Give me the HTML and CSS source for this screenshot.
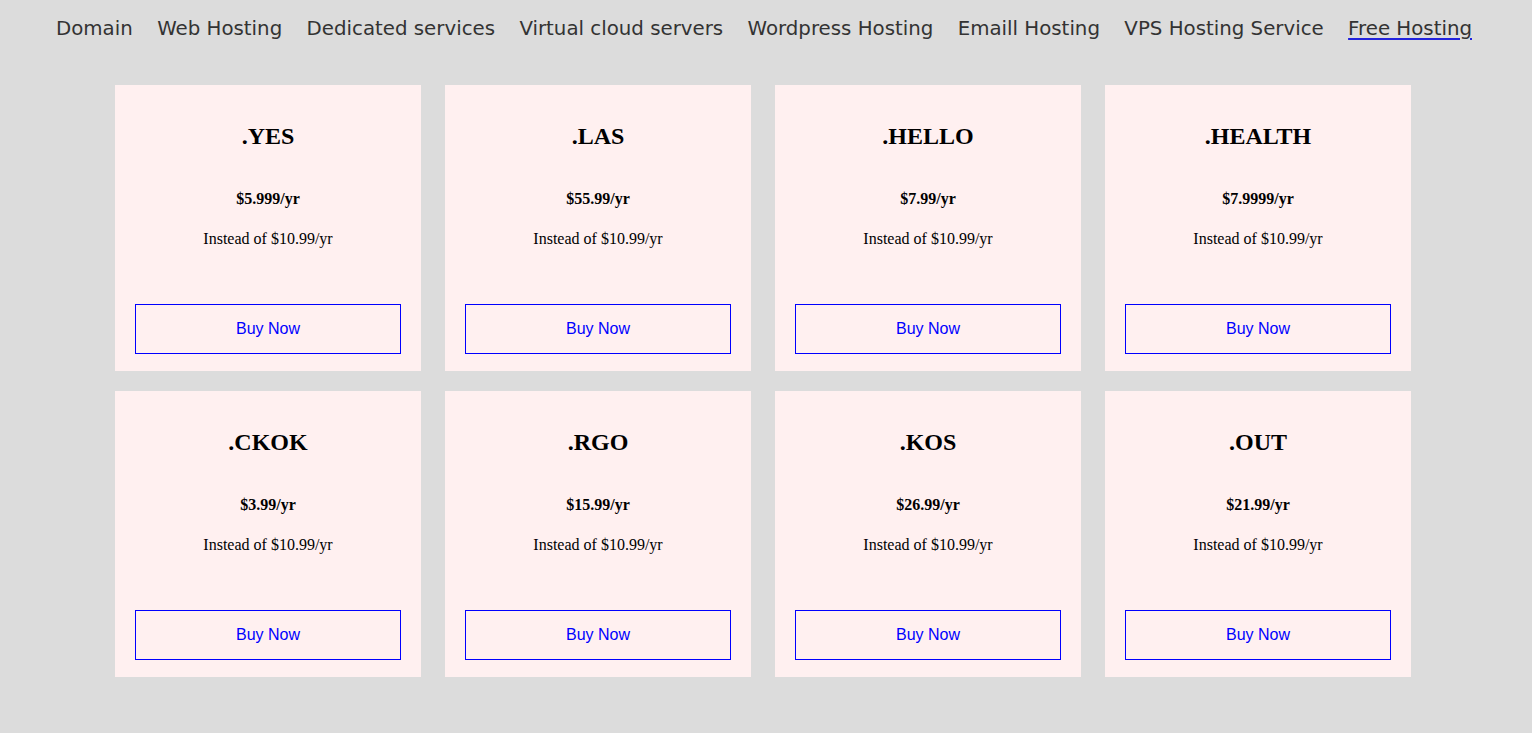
FILE: index.html
```html
<!DOCTYPE html>
<html lang="en">
<head>
<meta charset="utf-8">
<title>Domains</title>
<link rel="stylesheet" href="styles.css">
</head>
<body>
<nav class="nav">
  <a class="nav-link" href="#">Domain</a>
  <a class="nav-link" href="#">Web Hosting</a>
  <a class="nav-link" href="#">Dedicated services</a>
  <a class="nav-link" href="#">Virtual cloud servers</a>
  <a class="nav-link" href="#">Wordpress Hosting</a>
  <a class="nav-link" href="#">Emaill Hosting</a>
  <a class="nav-link" href="#">VPS Hosting Service</a>
  <a class="nav-link nav-link-active" href="#">Free Hosting</a>
</nav>
<main class="grid">
  <div class="card"><h2 class="card-title">.YES</h2><p class="card-price">$5.999/yr</p><p class="card-old">Instead of $10.99/yr</p><button class="card-btn">Buy Now</button></div>
  <div class="card"><h2 class="card-title">.LAS</h2><p class="card-price">$55.99/yr</p><p class="card-old">Instead of $10.99/yr</p><button class="card-btn">Buy Now</button></div>
  <div class="card"><h2 class="card-title">.HELLO</h2><p class="card-price">$7.99/yr</p><p class="card-old">Instead of $10.99/yr</p><button class="card-btn">Buy Now</button></div>
  <div class="card"><h2 class="card-title">.HEALTH</h2><p class="card-price">$7.9999/yr</p><p class="card-old">Instead of $10.99/yr</p><button class="card-btn">Buy Now</button></div>
  <div class="card"><h2 class="card-title">.CKOK</h2><p class="card-price">$3.99/yr</p><p class="card-old">Instead of $10.99/yr</p><button class="card-btn">Buy Now</button></div>
  <div class="card"><h2 class="card-title">.RGO</h2><p class="card-price">$15.99/yr</p><p class="card-old">Instead of $10.99/yr</p><button class="card-btn">Buy Now</button></div>
  <div class="card"><h2 class="card-title">.KOS</h2><p class="card-price">$26.99/yr</p><p class="card-old">Instead of $10.99/yr</p><button class="card-btn">Buy Now</button></div>
  <div class="card"><h2 class="card-title">.OUT</h2><p class="card-price">$21.99/yr</p><p class="card-old">Instead of $10.99/yr</p><button class="card-btn">Buy Now</button></div>
</main>
</body>
</html>
```
FILE: styles.css
```css
html, body {
  margin: 0;
  padding: 0;
}
body {
  background: #dcdcdc;
  font-family: "Liberation Serif", "Times New Roman", serif;
  color: #000;
}
.nav {
  display: flex;
  justify-content: center;
  gap: 24.4px;
  padding: 17px 4px 0 0;
  height: 70px;
  box-sizing: border-box;
}
.nav-link {
  font-family: "DejaVu Sans", Verdana, sans-serif;
  font-size: 19.8px;
  color: #333;
  text-decoration: none;
  line-height: 24px;
}
.nav-link-active {
  text-decoration: underline;
  text-decoration-color: #2222dd;
  text-decoration-thickness: 2px;
  text-underline-offset: 3px;
}
.grid {
  display: grid;
  grid-template-columns: repeat(4, 306px);
  column-gap: 24px;
  row-gap: 20px;
  padding-left: 115px;
  padding-top: 15px;
}
.card {
  background: #fff0f0;
  height: 286px;
  box-sizing: border-box;
  padding: 37px 20px 17px;
  display: flex;
  flex-direction: column;
  align-items: center;
  text-align: center;
}
.card-title {
  margin: 0;
  font-size: 24px;
  font-weight: bold;
  line-height: 28px;
}
.card-price {
  margin: 40px 0 0;
  font-size: 16px;
  font-weight: bold;
  line-height: 18px;
}
.card-old {
  margin: 22px 0 0;
  font-size: 16px;
  line-height: 18px;
}
.card-btn {
  margin-top: auto;
  width: 100%;
  height: 50px;
  background: transparent;
  border: 1px solid #0000ff;
  color: #0000ff;
  font-family: "Liberation Sans", Arial, sans-serif;
  font-size: 16px;
  cursor: pointer;
}
```
